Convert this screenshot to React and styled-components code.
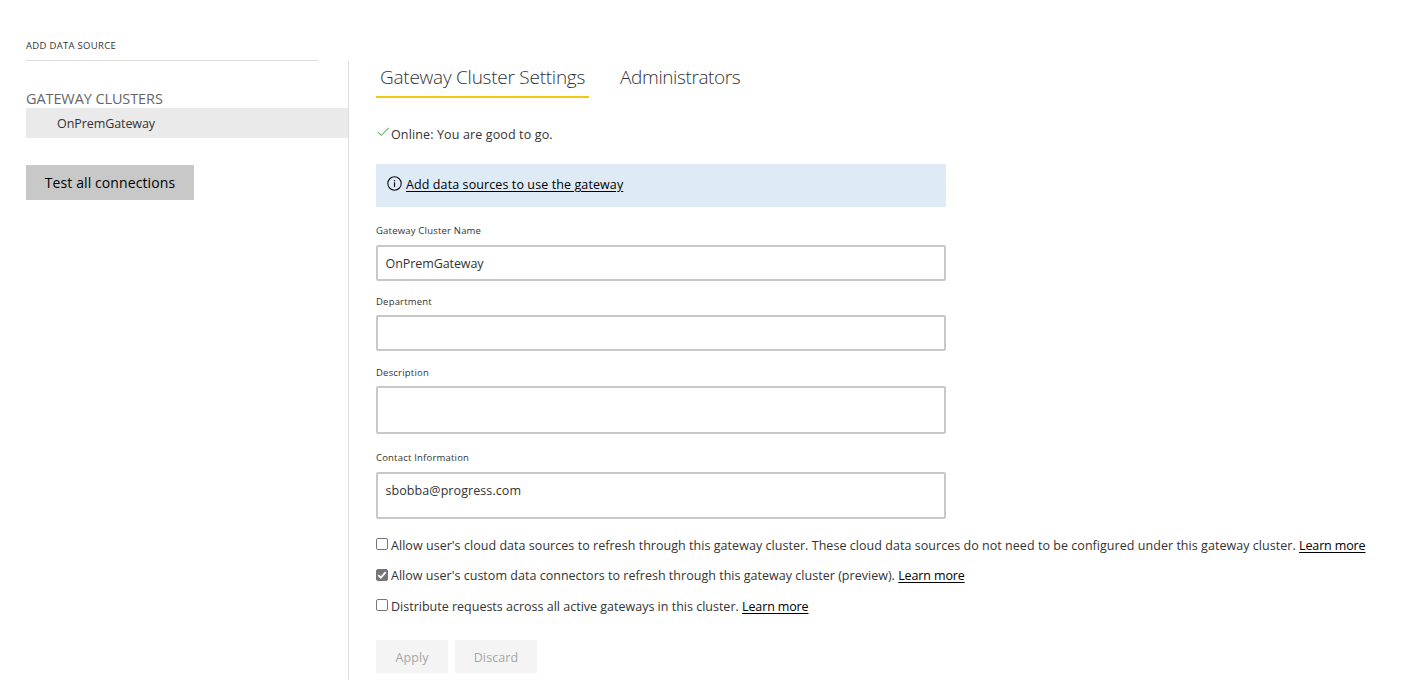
import React from 'react';

// style
import styled, { createGlobalStyle } from 'styled-components';

const GlobalStyle = createGlobalStyle`
  * {
    box-sizing: border-box;
  }

  body {
    margin: 0;
    background: #fff;
    color: #333;
    font-family: 'Segoe UI', 'Open Sans', 'Noto Sans', sans-serif;
    font-size: 12.5px;
    line-height: 20px;
  }
`

const Page = styled.div`
  display: flex;
  flex-direction: column;
  height: 680px;
  overflow: hidden;
`

const TopBar = styled.header`
  width: 292px;
  height: 61px;
  margin-left: 26px;
  padding-top: 36px;
  border-bottom: 1px solid #dcdcdc;
  font-size: 9.5px;
  letter-spacing: 0.3px;
`

const Body = styled.div`
  display: flex;
  flex: 1;
`

const Sidebar = styled.nav`
  flex: none;
  width: 349px;
  padding: 28px 0 0 26px;
  border-right: 1px solid #dcdcdc;
`

const SidebarTitle = styled.h2`
  margin: 0;
  height: 19px;
  color: #666;
  font-size: 14.5px;
  font-weight: 400;
  letter-spacing: -0.1px;
`

const Cluster = styled.div`
  height: 30px;
  padding-left: 31px;
  background: #eaeaea;
  line-height: 31px;
  letter-spacing: -0.08px;
`

const TestButton = styled.button`
  display: block;
  width: 168px;
  height: 35px;
  margin-top: 27px;
  padding: 0;
  border: 0;
  background: #c8c8c8;
  color: #000;
  font-family: inherit;
  font-size: 14px;
  letter-spacing: 0.1px;
`

const Main = styled.main`
  flex: 1;
  padding-left: 27px;
`

const Tabs = styled.div`
  display: flex;
  gap: 27px;
`

const Tab = styled.div`
  height: 37px;
  padding: 0 4px;
  border-bottom: 2px solid ${props => props.$active ? '#f2c811' : 'transparent'};
  color: #333;
  font-size: 19px;
  font-weight: 300;
  line-height: 32px;
  white-space: nowrap;
  letter-spacing: ${props => props.$spacing || 0}px;
`

const Status = styled.div`
  display: flex;
  height: 20px;
  margin-top: 26px;
  line-height: 22px;

  svg {
    margin: 2px 2px 0 1px;
  }
`

const Notice = styled.div`
  display: flex;
  width: 570px;
  height: 43px;
  margin-top: 20px;
  padding: 10px 0 0 11px;
  background: #deebf7;
  line-height: 22px;

  svg {
    margin: 2px 4px 0 0;
  }
`

const Link = styled.a`
  color: #000;
  text-decoration: underline;
  text-underline-offset: 1.5px;
  letter-spacing: ${props => props.$spacing || 0}px;
`

const Text = styled.span`
  letter-spacing: ${props => props.$spacing || 0}px;
`

const Field = styled.label`
  display: block;
  width: 570px;
  margin-top: ${props => props.$top}px;
`

const FieldLabel = styled.div`
  height: ${props => props.$height || 22}px;
  font-size: 9.5px;
  line-height: 18px;
  letter-spacing: 0.2px;
`

const Input = styled.input`
  display: block;
  width: 100%;
  height: 36px;
  padding: 0 8px 0 7.5px;
  border: 2px solid #c8c8c8;
  border-radius: 2px;
  color: #333;
  font: inherit;
  letter-spacing: -0.08px;
  outline: 0;
`

const TextArea = styled.textarea`
  display: block;
  width: 100%;
  height: ${props => props.$height}px;
  padding: 7px 8px 6px 7.5px;
  border: 2px solid #c8c8c8;
  border-radius: 2px;
  color: #333;
  font: inherit;
  letter-spacing: 0.08px;
  outline: 0;
  overflow: hidden;
  resize: none;
`

const Options = styled.div`
  margin-top: 16.7px;
`

const Option = styled.div`
  display: flex;
  height: 30.5px;
  white-space: nowrap;
`

const CheckBox = styled.input`
  flex: none;
  width: 12px;
  height: 12px;
  margin: 2.4px 3px 0 0;
  border: 1px solid #767676;
  border-radius: 2px;
  appearance: none;
  background: #fff;

  &:checked {
    background: #767676;
  }
`

const CheckWrap = styled.span`
  display: grid;
  height: 18px;

  > * {
    grid-area: 1 / 1;
  }

  svg {
    margin: 2.4px 0 0;
    pointer-events: none;
  }
`

const Actions = styled.div`
  display: flex;
  gap: 7px;
  margin-top: 12.8px;
`

const ActionButton = styled.button`
  width: ${props => props.$width}px;
  height: 33px;
  padding: 3px 0 0;
  border: 0;
  background: #f4f4f4;
  color: #a6a6a6;
  font: inherit;
  letter-spacing: 0.1px;
`

const options = [
  {
    text: "Allow user's cloud data sources to refresh through this gateway cluster. These cloud data sources do not need to be configured under this gateway cluster.",
    checked: false,
    spacing: 0.042,
  },
  {
    text: "Allow user's custom data connectors to refresh through this gateway cluster (preview).",
    checked: true,
    spacing: 0.025,
  },
  {
    text: 'Distribute requests across all active gateways in this cluster.',
    checked: false,
    spacing: 0,
  },
]

const CheckMark = () => (
  <svg width="12" height="12" viewBox="0 0 12 12" fill="none">
    <path d="M0.8 5.8L4.3 9.3L11.8 1.8" stroke="#6cb56c" strokeWidth="1.1" />
  </svg>
)

const InfoIcon = () => (
  <svg width="15" height="15" viewBox="0 0 15 15" fill="none">
    <circle cx="7.5" cy="7.5" r="6.7" stroke="#111" strokeWidth="1.1" />
    <path d="M7.5 6.3V11M7.5 4V5.2" stroke="#111" strokeWidth="1.2" />
  </svg>
)

export default class App extends React.Component {
  constructor(props){
    super(props);
    this.state = {
      options: options,
    }
  }

  toggleOption = (index) => {
    this.setState({
      options: this.state.options.map((o, i) => i === index ? { ...o, checked: !o.checked } : o)
    })
  }

  renderOptions = () => {
    return this.state.options.map(({ text, checked, spacing }, i) => (
      <Option key={i}>
        <CheckWrap>
          <CheckBox type="checkbox" checked={checked} onChange={() => this.toggleOption(i)} />
          {checked &&
            <svg width="12" height="12" viewBox="0 0 12 12" fill="none">
              <path d="M2.3 6.2L4.8 8.6L9.7 3.2" stroke="#fff" strokeWidth="1.8" />
            </svg>
          }
        </CheckWrap>
        <Text $spacing={spacing}>{text}&nbsp;</Text>
        <Link $spacing={-0.13}>Learn more</Link>
      </Option>
    ));
  }

  render = () => {
    return (
      <Page>
        <GlobalStyle />
        <TopBar>ADD DATA SOURCE</TopBar>
        <Body>
          <Sidebar>
            <SidebarTitle>GATEWAY CLUSTERS</SidebarTitle>
            <Cluster>OnPremGateway</Cluster>
            <TestButton>Test all connections</TestButton>
          </Sidebar>

          <Main>
            <Tabs>
              <Tab $active $spacing={-0.25}>Gateway Cluster Settings</Tab>
              <Tab $spacing={-0.4}>Administrators</Tab>
            </Tabs>

            <Status>
              <CheckMark />
              <Text $spacing={0.13}>Online: You are good to go.</Text>
            </Status>

            <Notice>
              <InfoIcon />
              <Link $spacing={0.1}>Add data sources to use the gateway</Link>
            </Notice>

            <Field $top={15}>
              <FieldLabel $height={23}>Gateway Cluster Name</FieldLabel>
              <Input defaultValue="OnPremGateway" />
            </Field>
            <Field $top={12}>
              <FieldLabel>Department</FieldLabel>
              <Input />
            </Field>
            <Field $top={13}>
              <FieldLabel>Description</FieldLabel>
              <TextArea $height={48} />
            </Field>
            <Field $top={15}>
              <FieldLabel $height={23}>Contact Information</FieldLabel>
              <TextArea $height={47} defaultValue="sbobba@progress.com" />
            </Field>

            <Options>{ this.renderOptions() }</Options>

            <Actions>
              <ActionButton $width={72}>Apply</ActionButton>
              <ActionButton $width={82}>Discard</ActionButton>
            </Actions>
          </Main>
        </Body>
      </Page>
    );
  }

}
